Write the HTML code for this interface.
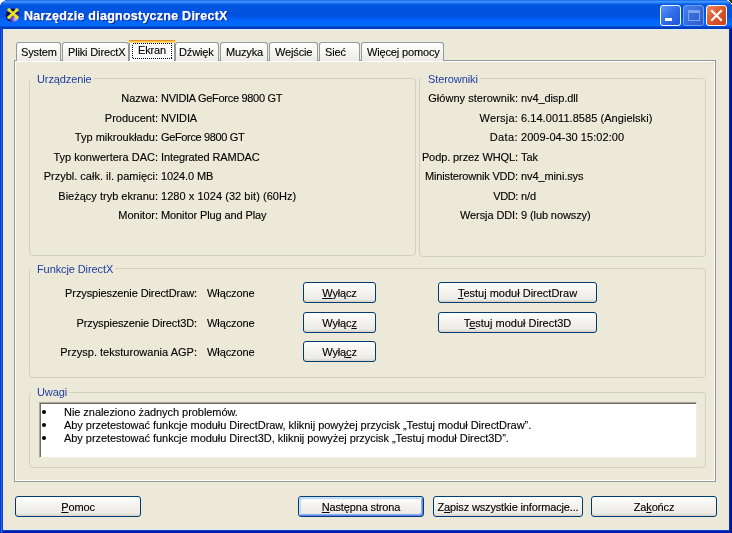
<!DOCTYPE html>
<html><head><meta charset="utf-8">
<style>
*{box-sizing:border-box;margin:0;padding:0}
html,body{width:732px;height:533px;overflow:hidden;background:#fff}
body{position:relative;font-family:"Liberation Sans",sans-serif;font-size:11px;color:#000;-webkit-text-stroke:0.12px #000}
.gl{-webkit-text-stroke:0}
.ttl{-webkit-text-stroke:0.25px #fff}
.a{position:absolute}
#win{left:0;top:0;width:732px;height:533px;background:#0014a4;border-radius:8px 8px 0 0;overflow:hidden}
#frame{left:0;top:0;width:3px;height:533px;background:linear-gradient(90deg,#0035cf 1px,#2563eb 1px,#2563eb 2px,#1941a5 2px)}
#frame2{left:729px;top:0;width:3px;height:533px;background:linear-gradient(90deg,#102a90 1px,#0818a0 1px,#0818a0 2px,#0010a0 2px)}
#frame3{left:3px;top:530px;width:726px;height:3px;background:linear-gradient(180deg,#1040c0 1px,#0020b0 1px,#0020b0 2px,#0014a4 2px)}
#title{left:0;top:0;width:732px;height:29px;border-radius:8px 8px 0 0;
 background:linear-gradient(180deg,#0a4fdc 0px,#3d95ff 1px,#3d95ff 2px,#0a5ee8 4px,#0055e0 6px,#0053de 16px,#0062fa 20px,#006bff 25px,#0066f5 26px,#003dc0 27px,#003db8 29px)}
#inner{left:3px;top:29px;width:726px;height:501px;background:#dcebff}
#client{left:4px;top:30px;width:724px;height:499px;background:#ece9d8}
.ttl{left:24px;top:8px;color:#fff;font-weight:bold;font-size:12.5px;letter-spacing:0.25px;white-space:nowrap;text-shadow:1px 1px 0 #0a1e8a;line-height:16px}
.t{position:absolute;white-space:nowrap;line-height:13px;letter-spacing:-0.1px}
.r{text-align:right}
.grp{position:absolute;border:1px solid #d0d0bf;border-radius:4px}
.gl{position:absolute;color:#1f3ca0;background:#ece9d8;padding:0 2px 0 6px;white-space:nowrap;line-height:13px;letter-spacing:-0.1px}
.btn{position:absolute;border:1px solid #003c74;border-radius:3px;
 background:linear-gradient(180deg,#fff 0%,#f5f4f0 40%,#ecebe6 85%,#d6d0c5 100%);text-align:center;line-height:19px;padding-top:1px;white-space:nowrap;letter-spacing:-0.15px}
.u{text-decoration:underline}
.tab{position:absolute;top:42px;height:19px;border:1px solid #919b9c;border-bottom:none;border-radius:3px 3px 0 0;
 background:linear-gradient(180deg,#fff 0%,#f3f3ef 60%,#ecebe5 100%);text-align:left;line-height:16px;padding-top:1px;white-space:nowrap;letter-spacing:-0.15px}
</style></head><body><div style="position:absolute;left:0;top:0;width:732px;height:533px;will-change:transform">
<div id="win" class="a">
 <div id="frame" class="a"></div>
 <div id="frame2" class="a"></div>
 <div id="frame3" class="a"></div>
 <div id="title" class="a"></div>
 <div id="inner" class="a"></div>
 <div id="client" class="a"></div>
</div>
<svg class="a" style="left:4px;top:6px" width="18" height="18" viewBox="0 0 18 18">
 <defs><radialGradient id="ig" cx="0.7" cy="0.78" r="0.65"><stop offset="0" stop-color="#c8c0ff"/><stop offset="0.35" stop-color="#6a5ad8"/><stop offset="0.7" stop-color="#1a1890"/><stop offset="1" stop-color="#0a0a58"/></radialGradient></defs>
 <circle cx="8.7" cy="9.3" r="6.9" fill="url(#ig)"/>
 <path d="M5 3.9 L12.9 11.3 M12.9 3.9 L5 11.3" stroke="#e8e820" stroke-width="2.6" stroke-linecap="round"/>
 <circle cx="5.1" cy="4" r="1.8" fill="#e8e820"/><circle cx="12.8" cy="4" r="1.8" fill="#e8e820"/><circle cx="5.1" cy="11.2" r="1.8" fill="#e8e820"/><circle cx="12.8" cy="11.2" r="1.8" fill="#e8e820"/>
</svg>
<div class="a" style="left:660px;top:5px;width:21px;height:21px;border:1px solid #fff;border-radius:3px;background:linear-gradient(135deg,#5a94f8 0%,#2f6ce8 50%,#1f57d6 100%)"><div class="a" style="left:4px;top:12px;width:7px;height:3px;background:#fff"></div></div>
<div class="a" style="left:683px;top:5px;width:21px;height:21px;border:1px solid #6f9ef0;border-radius:3px;background:linear-gradient(135deg,#4a80ea 0%,#3468d8 60%,#2a5ccf 100%)"><div class="a" style="left:4px;top:4px;width:12px;height:11px;border:1px solid #7da6ee;border-top-width:3px"></div></div>
<div class="a" style="left:706px;top:5px;width:21px;height:21px;border:1px solid #fff;border-radius:3px;background:linear-gradient(135deg,#f08a6a 0%,#e0582d 45%,#c8401a 100%)">
 <svg class="a" style="left:0;top:0" width="19" height="19"><path d="M5 5 L14 14 M14 5 L5 14" stroke="#fff" stroke-width="2.2" stroke-linecap="square"/></svg></div>
<div class="a" style="left:729px;top:0;width:3px;height:3px;background:linear-gradient(225deg,#1a3a20 50%,transparent 50%)"></div>
<div class="a ttl">Narzędzie diagnostyczne DirectX</div>

<!-- tab panel -->
<div class="a" style="left:14px;top:60px;width:702px;height:422px;border:1px solid #919b9c;border-top-color:#919b9c;background:#ece9d8;box-shadow:inset 1px 1px 0 #fff,inset -1px -1px 0 #fff"></div>

<div class="tab" style="left:16px;width:45px;padding-left:4px">System</div>
<div class="tab" style="left:62px;width:67px;padding-left:5px">Pliki DirectX</div>
<div class="tab" style="left:175px;width:44px;padding-left:3px">Dźwięk</div>
<div class="tab" style="left:220px;width:48px;padding-left:5px">Muzyka</div>
<div class="tab" style="left:269px;width:49px;padding-left:5px">Wejście</div>
<div class="tab" style="left:319px;width:41px;padding-left:5px">Sieć</div>
<div class="tab" style="left:361px;width:83px;padding-left:5px">Więcej pomocy</div>
<div class="tab" style="left:129px;top:40px;height:21px;width:46px;border-top:none;border-radius:0;background:#fcfcfe;line-height:16px;padding-top:2px;padding-left:8px">Ekran</div>
<div class="a" style="left:128px;top:40px;width:48px;height:3px;background:linear-gradient(180deg,#e68b2c 1px,#ffc73c 1px,#ffc73c 2px,#f8d88a 2px);border-radius:3px 3px 0 0"></div>
<svg class="a" style="left:132px;top:43px" width="40" height="16"><rect x="0.5" y="0.5" width="39" height="15" fill="none" stroke="#000" stroke-width="1" stroke-dasharray="1 1" shape-rendering="crispEdges"/></svg>

<!-- group boxes -->
<div class="grp" style="left:29px;top:78px;width:387px;height:178px"></div>
<div class="gl" style="left:31px;top:73px">Urządzenie</div>
<div class="grp" style="left:419px;top:78px;width:287px;height:179px"></div>
<div class="gl" style="left:422px;top:73px">Sterowniki</div>
<div class="grp" style="left:29px;top:268px;width:677px;height:110px"></div>
<div class="gl" style="left:31px;top:263px">Funkcje DirectX</div>
<div class="grp" style="left:29px;top:392px;width:677px;height:76px"></div>
<div class="gl" style="left:31px;top:386px">Uwagi</div>

<!-- Urzadzenie rows -->
<div class="t r" style="left:30px;width:128px;letter-spacing:0px;top:92px">Nazwa:</div>
<div class="t" style="left:161px;top:92px;letter-spacing:-0.3px">NVIDIA GeForce 9800 GT</div>
<div class="t r" style="left:30px;width:128px;letter-spacing:0px;top:112px">Producent:</div>
<div class="t" style="left:161px;top:112px">NVIDIA</div>
<div class="t r" style="left:30px;width:128px;letter-spacing:0px;top:131px">Typ mikroukładu:</div>
<div class="t" style="left:161px;top:131px;letter-spacing:-0.35px">GeForce 9800 GT</div>
<div class="t r" style="left:30px;width:128px;letter-spacing:0px;top:151px">Typ konwertera DAC:</div>
<div class="t" style="left:161px;top:151px">Integrated RAMDAC</div>
<div class="t r" style="left:30px;width:128px;letter-spacing:0px;top:170px">Przybl. całk. il. pamięci:</div>
<div class="t" style="left:161px;top:170px">1024.0 MB</div>
<div class="t r" style="left:30px;width:128px;letter-spacing:0px;top:190px">Bieżący tryb ekranu:</div>
<div class="t" style="left:161px;top:190px;letter-spacing:0.05px">1280 x 1024 (32 bit) (60Hz)</div>
<div class="t r" style="left:30px;width:128px;letter-spacing:0px;top:209px">Monitor:</div>
<div class="t" style="left:161px;top:209px">Monitor Plug and Play</div>

<!-- Sterowniki rows -->
<div class="t r" style="left:420px;width:98px;top:92px;letter-spacing:0.03px">Główny sterownik:</div>
<div class="t" style="left:521px;top:92px">nv4_disp.dll</div>
<div class="t r" style="left:420px;width:98px;top:112px;letter-spacing:0.2px">Wersja:</div>
<div class="t" style="left:521px;top:112px;letter-spacing:0.05px">6.14.0011.8585 (Angielski)</div>
<div class="t r" style="left:420px;width:98px;top:131px;letter-spacing:0.4px">Data:</div>
<div class="t" style="left:521px;top:131px;letter-spacing:0.05px">2009-04-30 15:02:00</div>
<div class="t r" style="left:420px;width:98px;top:151px">Podp. przez WHQL:</div>
<div class="t" style="left:521px;top:151px">Tak</div>
<div class="t r" style="left:420px;width:98px;top:170px;letter-spacing:-0.17px">Ministerownik VDD:</div>
<div class="t" style="left:521px;top:170px">nv4_mini.sys</div>
<div class="t r" style="left:420px;width:98px;top:190px;letter-spacing:-0.4px">VDD:</div>
<div class="t" style="left:521px;top:190px">n/d</div>
<div class="t r" style="left:420px;width:98px;top:209px">Wersja DDI:</div>
<div class="t" style="left:521px;top:209px">9 (lub nowszy)</div>

<!-- Funkcje rows -->
<div class="t r" style="left:30px;width:167px;top:287px">Przyspieszenie DirectDraw:</div>
<div class="t" style="left:207px;top:287px">Włączone</div>
<div class="btn" style="left:303px;top:282px;width:73px;height:21px"><span class="u">W</span>yłącz</div>
<div class="btn" style="left:438px;top:282px;width:159px;height:21px"><span style="letter-spacing:0px"><span class="u">T</span>estuj moduł DirectDraw</span></div>

<div class="t r" style="left:30px;width:167px;top:317px">Przyspieszenie Direct3D:</div>
<div class="t" style="left:207px;top:317px">Włączone</div>
<div class="btn" style="left:303px;top:312px;width:73px;height:21px">Wyłąc<span class="u">z</span></div>
<div class="btn" style="left:438px;top:312px;width:159px;height:21px"><span style="letter-spacing:0px">T<span class="u">e</span>stuj moduł Direct3D</span></div>

<div class="t r" style="left:30px;width:167px;top:346px;letter-spacing:0.02px">Przysp. teksturowania AGP:</div>
<div class="t" style="left:207px;top:346px">Włączone</div>
<div class="btn" style="left:303px;top:341px;width:73px;height:21px">Wyłą<span class="u">c</span>z</div>

<!-- Uwagi textbox -->
<div class="a" style="left:39px;top:402px;width:658px;height:56px;background:#fff;border-top:1px solid #aca899;border-left:1px solid #aca899;border-right:1px solid #f1efe2;border-bottom:1px solid #f1efe2;box-shadow:inset 1px 1px 0 #716f64"></div>
<div class="a" style="left:42px;top:410px;width:4px;height:4px;border-radius:2px;background:#000"></div>
<div class="a" style="left:42px;top:423px;width:4px;height:4px;border-radius:2px;background:#000"></div>
<div class="a" style="left:42px;top:436px;width:4px;height:4px;border-radius:2px;background:#000"></div>
<div class="t" style="left:64px;top:406px;letter-spacing:-0.05px">Nie znaleziono żadnych problemów.</div>
<div class="t" style="left:64px;top:419px;letter-spacing:-0.05px">Aby przetestować funkcje modułu DirectDraw, kliknij powyżej przycisk „Testuj moduł DirectDraw”.</div>
<div class="t" style="left:64px;top:432px;letter-spacing:-0.05px">Aby przetestować funkcje modułu Direct3D, kliknij powyżej przycisk „Testuj moduł Direct3D”.</div>

<!-- bottom buttons -->
<div class="btn" style="left:15px;top:496px;width:126px;height:21px"><span class="u">P</span>omoc</div>
<div class="btn" style="left:298px;top:496px;width:126px;height:21px;box-shadow:inset 1px 1px 0 #cee7ff,inset -1px -1px 0 #6982ee,inset 2px 2px 0 #bcd4f6,inset -2px -2px 0 #89adf4"><span class="u">N</span>astępna strona</div>
<div class="btn" style="left:433px;top:496px;width:150px;height:21px">Z<span class="u">a</span>pisz wszystkie informacje...</div>
<div class="btn" style="left:591px;top:496px;width:126px;height:21px">Za<span class="u">k</span>ończ</div>

</div></body></html>
